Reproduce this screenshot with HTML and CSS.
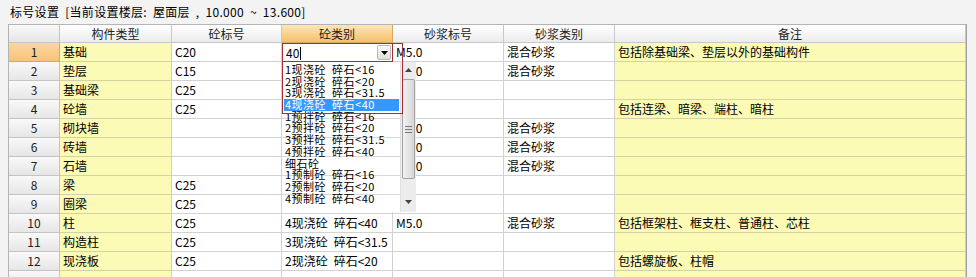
FILE: index.html
```html
<!DOCTYPE html>
<html lang="zh">
<head>
  <meta charset="UTF-8">
  <title>标号设置</title>
  <link rel="stylesheet" href="styles.css">
</head>
<body>
  <div class="title">标号设置 [当前设置楼层: 屋面层 , 10.000 ~ 13.600]</div>

  <div class="sheet">
    <div class="row head">
      <div class="cell num"></div>
      <div class="cell">构件类型</div>
      <div class="cell">砼标号</div>
      <div class="cell active">砼类别</div>
      <div class="cell">砂浆标号</div>
      <div class="cell">砂浆类别</div>
      <div class="cell">备注</div>
    </div>

    <div class="row">
      <div class="cell num cur">1</div>
      <div class="cell yel">基础</div>
      <div class="cell">C20</div>
      <div class="cell"></div>
      <div class="cell">M5.0</div>
      <div class="cell">混合砂浆</div>
      <div class="cell yel">包括除基础梁、垫层以外的基础构件</div>
    </div>
    <div class="row">
      <div class="cell num">2</div>
      <div class="cell yel">垫层</div>
      <div class="cell">C15</div>
      <div class="cell"></div>
      <div class="cell">M5.0</div>
      <div class="cell">混合砂浆</div>
      <div class="cell yel"></div>
    </div>
    <div class="row">
      <div class="cell num">3</div>
      <div class="cell yel">基础梁</div>
      <div class="cell">C25</div>
      <div class="cell"></div>
      <div class="cell"></div>
      <div class="cell"></div>
      <div class="cell yel"></div>
    </div>
    <div class="row">
      <div class="cell num">4</div>
      <div class="cell yel">砼墙</div>
      <div class="cell">C25</div>
      <div class="cell"></div>
      <div class="cell"></div>
      <div class="cell"></div>
      <div class="cell yel">包括连梁、暗梁、端柱、暗柱</div>
    </div>
    <div class="row">
      <div class="cell num">5</div>
      <div class="cell yel">砌块墙</div>
      <div class="cell"></div>
      <div class="cell"></div>
      <div class="cell">M5.0</div>
      <div class="cell">混合砂浆</div>
      <div class="cell yel"></div>
    </div>
    <div class="row">
      <div class="cell num">6</div>
      <div class="cell yel">砖墙</div>
      <div class="cell"></div>
      <div class="cell"></div>
      <div class="cell">M5.0</div>
      <div class="cell">混合砂浆</div>
      <div class="cell yel"></div>
    </div>
    <div class="row">
      <div class="cell num">7</div>
      <div class="cell yel">石墙</div>
      <div class="cell"></div>
      <div class="cell"></div>
      <div class="cell">M5.0</div>
      <div class="cell">混合砂浆</div>
      <div class="cell yel"></div>
    </div>
    <div class="row">
      <div class="cell num">8</div>
      <div class="cell yel">梁</div>
      <div class="cell">C25</div>
      <div class="cell"></div>
      <div class="cell"></div>
      <div class="cell"></div>
      <div class="cell yel"></div>
    </div>
    <div class="row">
      <div class="cell num">9</div>
      <div class="cell yel">圈梁</div>
      <div class="cell">C25</div>
      <div class="cell"></div>
      <div class="cell"></div>
      <div class="cell"></div>
      <div class="cell yel"></div>
    </div>
    <div class="row">
      <div class="cell num">10</div>
      <div class="cell yel">柱</div>
      <div class="cell">C25</div>
      <div class="cell">4现浇砼&ensp;碎石&lt;40</div>
      <div class="cell">M5.0</div>
      <div class="cell">混合砂浆</div>
      <div class="cell yel">包括框架柱、框支柱、普通柱、芯柱</div>
    </div>
    <div class="row">
      <div class="cell num">11</div>
      <div class="cell yel">构造柱</div>
      <div class="cell">C25</div>
      <div class="cell">3现浇砼&ensp;碎石&lt;31.5</div>
      <div class="cell"></div>
      <div class="cell"></div>
      <div class="cell yel"></div>
    </div>
    <div class="row">
      <div class="cell num">12</div>
      <div class="cell yel">现浇板</div>
      <div class="cell">C25</div>
      <div class="cell">2现浇砼&ensp;碎石&lt;20</div>
      <div class="cell"></div>
      <div class="cell"></div>
      <div class="cell yel">包括螺旋板、柱帽</div>
    </div>
    <div class="row">
      <div class="cell num"></div>
      <div class="cell yel"></div>
      <div class="cell"></div>
      <div class="cell"></div>
      <div class="cell"></div>
      <div class="cell"></div>
      <div class="cell yel"></div>
    </div>

    <!-- combo editor open on row 1 -->
    <div class="combo-input">
      40<span class="caret"></span>
      <span class="combo-btn">
        <svg width="7" height="4" viewBox="0 0 7 4"><path d="M0 0H7L3.5 4Z" fill="#000"/></svg>
      </span>
    </div>

    <div class="combo-list">
      <div class="item">1现浇砼&ensp;碎石&lt;16</div>
      <div class="item">2现浇砼&ensp;碎石&lt;20</div>
      <div class="item">3现浇砼&ensp;碎石&lt;31.5</div>
      <div class="item sel">4现浇砼&ensp;碎石&lt;40</div>
      <div class="item">1预拌砼&ensp;碎石&lt;16</div>
      <div class="item">2预拌砼&ensp;碎石&lt;20</div>
      <div class="item">3预拌砼&ensp;碎石&lt;31.5</div>
      <div class="item">4预拌砼&ensp;碎石&lt;40</div>
      <div class="item">细石砼</div>
      <div class="item">1预制砼&ensp;碎石&lt;16</div>
      <div class="item">2预制砼&ensp;碎石&lt;20</div>
      <div class="item">4预制砼&ensp;碎石&lt;40</div>

      <div class="scroll">
        <div class="arrow up"><svg width="7" height="4" viewBox="0 0 7 4"><path d="M0 4H7L3.5 0Z" fill="#444"/></svg></div>
        <div class="thumb"><span></span><span></span><span></span></div>
        <div class="arrow down"><svg width="7" height="4" viewBox="0 0 7 4"><path d="M0 0H7L3.5 4Z" fill="#444"/></svg></div>
      </div>
    </div>

    <div class="combo-frame"></div>
  </div>
</body>
</html>
```

FILE: styles.css
```css
body {
  margin: 0;
  width: 976px;
  height: 277px;
  overflow: hidden;
  background-color: #f3f3f3;
  color: #000;
  font-family: "Noto Sans CJK SC", "Liberation Sans", sans-serif;
  font-size: 12px;
}

.title {
  height: 24px;
  line-height: 24px;
  padding-left: 10px;
  white-space: nowrap;
  word-spacing: 3px;
  letter-spacing: 0.3px;
}

.sheet {
  position: relative;
  margin-left: 8px;
  width: 957px;
  border-top: 1px solid #b4b4b4;
  border-left: 1px solid #b4b4b4;
  border-right: 1px solid #a0a0a0;
  background-color: #fff;
}

.row {
  display: grid;
  grid-template-columns: 51px 112px 110px 111px 111px 111px 351px;
  height: 19px;
}

.cell {
  box-sizing: border-box;
  padding-left: 3px;
  line-height: 18px;
  white-space: nowrap;
  overflow: hidden;
  border-right: 1px solid #d2d2d2;
  border-bottom: 1px solid #d2d2d2;
}

.head {
  height: 18px;
}

.head .cell {
  padding-left: 0;
  line-height: 17px;
  text-align: center;
  color: #222;
  background: linear-gradient(#ffffff, #ececec);
  border-color: #c8c8c8;
}

.head .active {
  background: linear-gradient(#fde6b8, #f5c06c);
  border-color: #d9a860;
}

.cell.num {
  padding-left: 0;
  text-align: center;
  color: #222;
  background: linear-gradient(#f9f9f9, #e6e6e6);
  border-color: #c4c4c4;
}

.cell.num.cur {
  background: linear-gradient(#fcd79c, #f8c27d);
  border-color: #d6a865;
}

.cell.yel {
  background-color: #fbfbb6;
  border-color: #d2d2a6;
}

/* combo editor */
.combo-input {
  position: absolute;
  left: 273px;
  top: 18px;
  width: 111px;
  height: 19px;
  box-sizing: border-box;
  padding-left: 3px;
  line-height: 17px;
  background-color: #fff;
  border: 1px solid #b02a35;
  z-index: 3;
}

.caret {
  display: inline-block;
  width: 1px;
  height: 13px;
  margin-left: 1px;
  vertical-align: -2px;
  background-color: #000;
}

.combo-btn {
  position: absolute;
  right: 1px;
  top: 1px;
  width: 14px;
  height: 15px;
  box-sizing: border-box;
  border: 1px solid #b8b8b8;
  border-radius: 2px;
  background: linear-gradient(#fafafa, #dedede);
  display: flex;
  align-items: center;
  justify-content: center;
}

.combo-list {
  position: absolute;
  left: 273px;
  top: 37px;
  width: 134px;
  height: 150px;
  box-sizing: border-box;
  padding-top: 2px;
  overflow: hidden;
  background:
    linear-gradient(#fff, #fff) top / 100% 51px no-repeat,
    repeating-linear-gradient(#fff 0, #fff 18px, #d8d8d8 18px, #d8d8d8 19px);
  z-index: 2;
}

.item {
  width: 114px;
  margin-left: 2px;
  padding-left: 1px;
  height: 11.7px;
  font-size: 11px;
  letter-spacing: 0.5px;
  line-height: 11.7px;
  white-space: nowrap;
}

.item.sel {
  background-color: #3399ff;
  color: #fff;
}

.scroll {
  position: absolute;
  right: 0;
  top: 0;
  width: 15px;
  height: 150px;
  background-color: #ececec;
  border-left: 1px solid #e0e0e0;
}

.arrow {
  height: 16px;
  display: flex;
  align-items: center;
  justify-content: center;
}

.arrow.down {
  position: absolute;
  bottom: 2px;
  left: 0;
  right: 0;
}

.thumb {
  margin: 1px 1px 0 1px;
  height: 100px;
  box-sizing: border-box;
  border: 1px solid #a4a4a4;
  border-radius: 2px;
  background: linear-gradient(90deg, #f2f2f2, #d6d6d6);
  display: flex;
  flex-direction: column;
  align-items: center;
  justify-content: center;
  gap: 2px;
}

.thumb span {
  width: 7px;
  height: 1px;
  background-color: #777;
}

.combo-frame {
  position: absolute;
  left: 273px;
  top: 18px;
  width: 121px;
  height: 71px;
  box-sizing: border-box;
  border: 1px solid #b02a35;
  pointer-events: none;
  z-index: 4;
}
```
